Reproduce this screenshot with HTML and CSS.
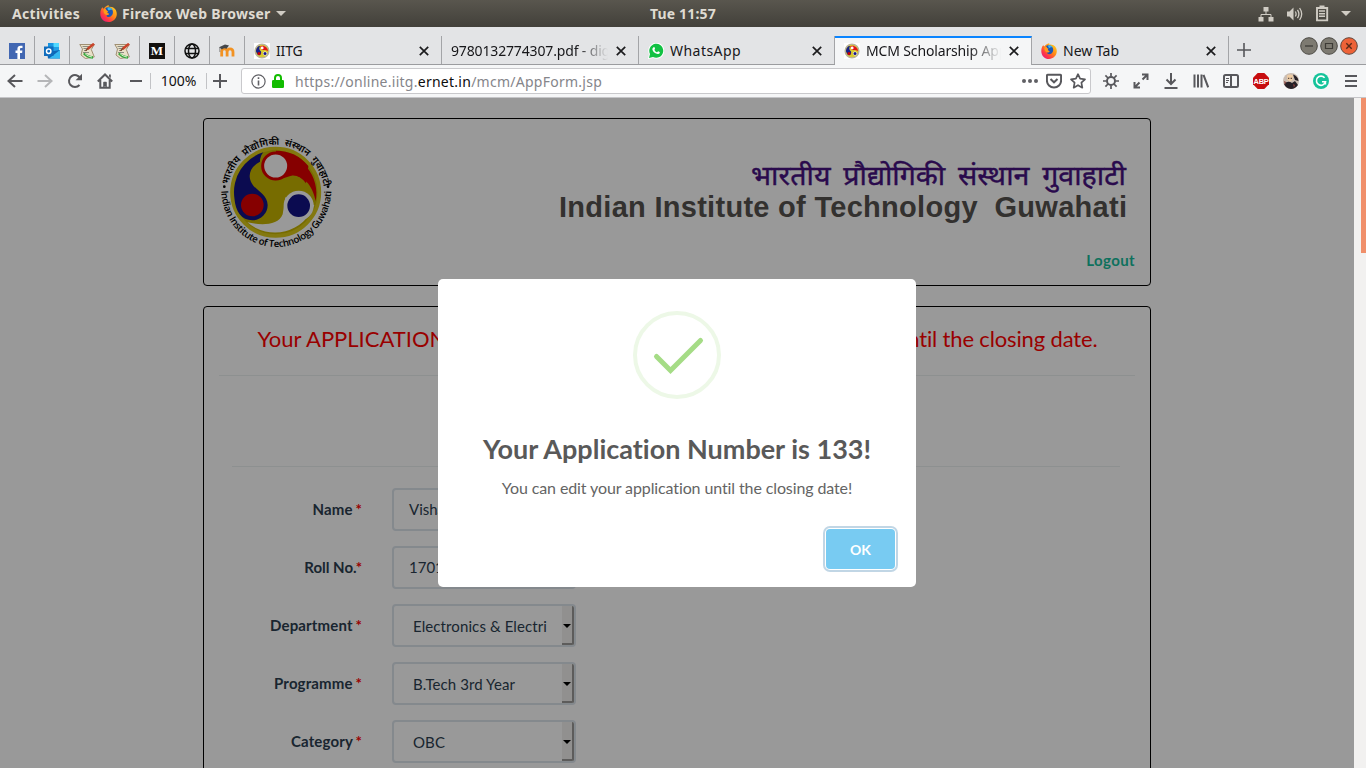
FILE: index.html
```html
<!DOCTYPE html>
<html lang="en">
<head>
<meta charset="utf-8">
<title>MCM Scholarship Application</title>
<link rel="stylesheet" href="styles.css">
</head>
<body>
<svg class="defs" width="0" height="0">
  <defs>
    <linearGradient id="fx" x1="1" y1="0" x2="0.1" y2="1"><stop offset="0" stop-color="#ffe226"/><stop offset=".45" stop-color="#ff8a16"/><stop offset=".75" stop-color="#ff3647"/><stop offset="1" stop-color="#e31587"/></linearGradient>
    <linearGradient id="env" x1="0" y1="0" x2="1" y2="1"><stop offset="0" stop-color="#1490df"/><stop offset="1" stop-color="#28a8ea"/></linearGradient>
    <symbol id="firefox" viewBox="0 0 16 16">
      <path fill="url(#fx)" d="M2.2 2.2 3.4 3.5C5 1.2 6.5.7 8.4.3L8 1.6C13 1 16 4.5 15.8 8.600 15.600 13 12 16 8 16 3.500 16 .3 12.600.3 8.200.3 5.500 1 3.500 2.200 2.200z"/>
      <path fill="#1d57b5" d="M5 3C7 1.500 11 2 12 5.500 12.800 9 10.500 11.500 8 11.200 6 11 5.500 9.500 7 9.300 8.500 9.200 9 8.300 8 7.900 6.500 7.800 6.500 6.500 7.500 5.800 6 5.500 5.500 4 5 3z"/>
      <path fill="#33b7f2" d="M7 2.500c2-.8 4.300.3 4.900 2.200C10.500 4 9 4.500 8.600 5.200 7.500 4.800 7 3.500 7 2.500z"/>
      <path fill="#ff9a1a" d="M3.400 4.500C4.500 3.500 5.500 3.700 6 5c.5.7 1.200.8 1.500.8C6.500 6.500 6.400 7.700 8 7.900c.8.300.2 1.300-1.500 1.400C5 9.500 3 7.500 3.400 4.500z"/>
    </symbol>
    <symbol id="iitg" viewBox="0 0 16 16">
      <rect width="16" height="16" fill="#fff"/>
      <circle cx="8" cy="8" r="6.900" fill="#d9c92e" stroke="#b8b3a0" stroke-width="1.400"/>
      <path fill="#17218c" d="M2 8.500C2 5 4 3 6 3 5 5 5 7 7 8.500 8 12 5 13 3.600 11.500z"/>
      <path fill="#e3131b" d="M6 3.500C9 1.500 14 4 14 8.500 12.500 6.500 10 8 7.500 6.300z"/>
      <circle cx="8.200" cy="4.900" r="1.400" fill="#fff"/><circle cx="5" cy="10.500" r="1.500" fill="#c00"/>
      <circle cx="11" cy="10.500" r="1.900" fill="#fff"/><circle cx="11" cy="10.500" r="1.500" fill="#14148a"/>
    </symbol>
    <symbol id="notes" viewBox="0 0 16 16">
      <path fill="#e9e0c8" stroke="#a08f72" d="M.8 1.500h14.500l-3 5 3 7.500-9 1.500L2 12 3.500 6z"/>
      <path fill="none" stroke="#8b8a80" d="M3.500 3.500h7M4.500 5.500h4M5 7.500h3M4 9.500h6"/>
      <path stroke="#c9442b" stroke-width="2.600" d="M15 .8 8.500 6"/><path stroke="#7d3b1c" stroke-width="1.200" d="M9 5.500 6.500 7.700"/>
      <path fill="none" stroke="#37a63b" stroke-width="2.600" d="M5 10.200c1.500 2 4 3.800 9 4.300"/><path fill="none" stroke="#d8f0d0" d="M6 10.500c2 2 4 3 7 3.500"/>
    </symbol>
    <symbol id="close" viewBox="0 0 10 10"><path stroke="#1c1c1e" stroke-width="1.700" d="M.8.800l8.400 8.400M9.200.8.800 9.200"/></symbol>
  </defs>
</svg>

<div class="screen">
  <header class="panel">
    <span class="activities">Activities</span>
    <svg class="panel-fx" width="17" height="17"><use href="#firefox"/></svg>
    <span class="app-name">Firefox Web Browser</span>
    <svg class="caret" width="10" height="5"><path d="M0 0h10L5 5z" fill="#d0ccc4"/></svg>
    <span class="clock">Tue 11:57</span>
    <div class="tray">
      <svg width="16" height="16" fill="#d0ccc4"><path d="M5.500 1h5v4.500h-5zM.5 11h5v4.500h-5zM10.500 11h5v4.500h-5z"/><path d="M8 5v3.500M3 11V8.500h10V11" fill="none" stroke="#d0ccc4"/></svg>
      <svg width="17" height="16" fill="none" stroke="#d0ccc4" stroke-width="1.300"><path fill="#d0ccc4" stroke="none" d="M1 5.500h2.500L7.500 1.500v13L3.500 10.500H1z"/><path d="M9.300 5.500q1.600 2.500 0 5M11.500 3.800q2.800 4.200 0 8.400M13.600 2q4.200 6 0 12"/></svg>
      <svg width="14" height="17" fill="#d0ccc4"><path fill="none" stroke="#d0ccc4" stroke-width="1.900" d="M2 3h10.200v12.400H2z"/><path d="M4.500.4h5v2.800h-5zM4 5.300h6v1.500H4zM4 7.900h6v1.500H4zM4 10.500h6V12H4z"/></svg>
      <svg width="10" height="5"><path d="M0 0h10L5 5z" fill="#d0ccc4"/></svg>
    </div>
  </header>

  <nav class="tabs">
    <div class="pin"><svg width="16" height="16"><rect width="16" height="16" fill="#4267b2"/><path fill="#fff" d="M8.400 16V10H6.500V7.500h1.900V6c0-2.300 1.300-3.300 3.200-3.300.9 0 1.700.1 1.900.1V5h-1.200c-1 0-1.300.5-1.300 1.200v1.300h2.400L13.100 10H11v6z"/></svg></div>
    <div class="pin"><svg width="16" height="16"><path fill="url(#env)" d="M4 0h11v9H4z"/><path fill="#50d9ff" d="M9.500 0H15v4H9.500z"/><path fill="#0a5aa6" d="M4 5h5v5H4z"/><path fill="#1066b5" d="M3 9l13-2v8.500H4z"/><path fill="#36b8f0" d="M16 7v8.500H5z"/><rect y="3.500" width="9.500" height="9.500" fill="#0f6cbd"/><circle cx="4.700" cy="8.200" r="2.200" fill="none" stroke="#fff" stroke-width="1.500"/></svg></div>
    <div class="pin"><svg width="16" height="16"><use href="#notes"/></svg></div>
    <div class="pin"><svg width="16" height="16"><use href="#notes"/></svg></div>
    <div class="pin"><span class="medium">M</span></div>
    <div class="pin"><svg width="16" height="16" fill="none" stroke="#111" stroke-width="1.500"><circle cx="8" cy="8" r="7"/><ellipse cx="8" cy="8" rx="3.500" ry="7"/><path d="M1.500 5.500h13M1.500 10.500h13"/></svg></div>
    <div class="pin"><svg width="16" height="16"><path fill="none" stroke="#f29222" stroke-width="2.800" d="M2.700 13.500V8.500q0-2.600 2.700-2.600T8.100 8.500v5M8.100 9q0-3.100 2.900-3.100 3 0 3 3.100v4.500"/><path fill="#45474a" d="M0 4.300 6 1.500l4 1-2.500 3.200Q5 4.500 3 6.500z"/><path stroke="#777" stroke-width=".8" d="M.8 4.300V9"/></svg></div>
    <div class="tab"><svg width="16" height="16"><use href="#iitg"/></svg><span class="tab-title">IITG</span><svg class="x" width="10" height="10"><use href="#close"/></svg></div>
    <div class="tab"><span class="tab-title fade pdf">9780132774307.pdf - digital</span><svg class="x" width="10" height="10"><use href="#close"/></svg></div>
    <div class="tab tab-wa"><svg width="16" height="16"><path fill="#fff" d="M0 16 1 11A8 8 0 1 1 5 15z"/><path fill="#12c143" d="M1 15 2 11A7 7 0 1 1 5 14z"/><path fill="#fff" d="M5.600 4.200c.7-.3 1 .2 1.400 1.400.2.500-.6 1-.5 1.300.5 1.100 1.400 1.900 2.500 2.300.4.100.8-1 1.200-.9 1.500.7 1.800.8 1.500 1.600-.5 1.300-2.300 1.400-3.700.7-2-1-3.100-2.400-3.600-3.900-.2-1 .4-2.200 1.200-2.500z"/></svg><span class="tab-title wide">WhatsApp</span><svg class="x" width="10" height="10"><use href="#close"/></svg></div>
    <div class="tab active"><svg width="16" height="16"><use href="#iitg"/></svg><span class="tab-title fade mcm">MCM Scholarship Application</span><svg class="x" width="10" height="10"><use href="#close"/></svg></div>
    <div class="tab"><svg width="16" height="16"><use href="#firefox"/></svg><span class="tab-title newtab">New Tab</span><svg class="x" width="10" height="10"><use href="#close"/></svg></div>
    <svg class="plus" width="14" height="14"><path d="M7 0v14M0 7h14" stroke="#55565a" stroke-width="1.600"/></svg>
    <div class="winbtns">
      <svg width="18" height="18"><circle cx="9" cy="9" r="8.300" fill="#7d7a71" stroke="#4b4943"/><path d="M5 9h8" stroke="#3d3b36" stroke-width="1.300"/></svg>
      <svg width="18" height="18"><circle cx="9" cy="9" r="8.300" fill="#7d7a71" stroke="#4b4943"/><path d="M5.500 6.500h7v5h-7z" fill="none" stroke="#3d3b36" stroke-width="1.200"/></svg>
      <svg width="18" height="18"><circle cx="9" cy="9" r="8.300" fill="#ee6237" stroke="#63463a"/><path d="M6.300 6.300l5.400 5.400M11.700 6.300l-5.400 5.400" stroke="#5b2a17" stroke-width="1.400"/></svg>
    </div>
  </nav>

  <div class="toolbar">
    <div class="cell"><svg width="16" height="16" class="ic"><path d="M8 2 1.500 8 8 14M1.500 8H15.500"/></svg></div>
    <div class="cell"><svg width="16" height="16" class="ic dim"><path d="M8 2 14.500 8 8 14M14.500 8H.5"/></svg></div>
    <div class="cell"><svg width="16" height="16" class="ic"><path d="M12.500 12A6 6 0 1 1 13.300 5.200"/><path d="M15 .8V7.200H8.600z" class="solid"/></svg></div>
    <div class="cell"><svg width="16" height="16" class="ic"><path d="M.8 8.500 8 1.500l7.200 7M3.300 7v7.800h9.400V7"/><path class="solid" d="M6.200 15V9.500q0-.7.700-.7h2.200q.7 0 .7.700V15H8.600v-1.500H7.400V15zM12 1.500h1.800V5L12 3.500z"/></svg></div>
    <div class="cell minus"><svg width="12" height="16" class="ic"><path d="M0 8h12"/></svg></div>
    <div class="zoomval">100%</div>
    <div class="zplus"><svg width="14" height="14" class="ic"><path d="M7 0v14M0 7h14"/></svg></div>
    <div class="urlbar">
      <svg width="15" height="15"><circle cx="7.500" cy="7.500" r="6.600" fill="none" stroke="#606065" stroke-width="1.200"/><path d="M7.500 3.300v1.800M7.500 6.500v5" stroke="#606065" stroke-width="1.600"/></svg>
      <svg class="lock" width="12" height="14"><rect y="6" width="12" height="8" rx="1.200" fill="#12bc00"/><path d="M3 7V4q0-3 3-3t3 3v3" fill="none" stroke="#12bc00" stroke-width="2"/></svg>
      <span class="url">https://online.iitg.<b>ernet.in</b>/mcm/AppForm.jsp</span>
      <div class="urlicons">
        <svg width="16" height="16" fill="#606065"><circle cx="2" cy="8" r="2"/><circle cx="8" cy="8" r="2"/><circle cx="14" cy="8" r="2"/></svg>
        <svg width="16" height="16" class="ic"><path d="M1.900 1.800h12.200q1 0 1 1V7.500a7.100 7 0 0 1-14.200 0V2.800q0-1 1-1zM4.500 6 8 9.300 11.500 6"/></svg>
        <svg width="16" height="16" class="ic"><path stroke-linejoin="round" stroke-width="1.700" d="M8 1.200 10.100 5.700 15 6.300 11.400 9.700 12.300 14.700 8 12.200 3.700 14.700 4.600 9.700 1 6.300 5.900 5.700z"/></svg>
      </div>
    </div>
    <div class="ext">
      <div class="cell"><svg width="16" height="16" class="ic"><circle cx="8" cy="8" r="4"/><path stroke-width="1.700" d="M8 0v3.500M8 12.500V16M0 8h3.500M12.500 8H16M2.400 2.400 5 5M11 11l2.600 2.600M13.600 2.400 11 5M5 11l-2.600 2.600"/></svg></div>
      <div class="cell"><svg width="16" height="16" class="ic"><path d="M9 1.500h5.500V7M14 2 9.500 6.500M7 14.500H1.500V9M2 14l4.500-4.500"/></svg></div>
      <div class="cell"><svg width="16" height="16" class="ic"><path d="M8 0v11M3.500 6.500 8 11l4.500-4.500M1.500 15h13"/></svg></div>
      <div class="cell"><svg width="16" height="16" class="ic"><path d="M1.500 1.500v13M5 1.500v13M8.500 1.500v13M10.500 1.800l4.700 12.500"/></svg></div>
      <div class="cell"><svg width="16" height="16" class="ic"><rect x="1" y="2" width="14" height="12" rx="1.500"/><path d="M8 2v12"/><path stroke-width="1" d="M3 5.500h3M3 7.500h3M3 9.500h2"/></svg></div>
      <div class="cell"><svg width="16" height="16"><path fill="#c70d0f" d="M4.700 0h6.600L16 4.700v6.600L11.300 16H4.700L0 11.300V4.700z"/><text x="8" y="10.800" text-anchor="middle" class="abp">ABP</text></svg></div>
      <div class="cell"><svg width="16" height="16"><circle cx="8" cy="8" r="8" fill="#cbbdb2"/><path fill="#262027" d="M10 1.500Q15 3 15.500 8L12 7zM1 11Q5 7 9 10l3-2 3 4Q12 16 8 16 3 15.500 1 11z"/><path fill="#efcda4" d="M4 2.500q3-2 6 0l-.5 4.500L7 8.500 4.500 7z"/><path fill="#8a413d" d="M1 8l2 1-1 3zM10 11l2 1-1 3z"/><path stroke="#3a2b2c" d="M5 5.300h1.300M7.600 5.300H9"/></svg></div>
      <div class="cell"><svg width="16" height="16"><circle cx="8" cy="8" r="8" fill="#15c39a"/><path fill="none" stroke="#fff" stroke-width="1.600" d="M11.600 4.800A4.600 4.600 0 1 0 12.500 8.800H9M12.400 8.500v3"/></svg></div>
      <div class="cell"><svg width="12" height="16" class="ic"><path d="M0 3h12M0 8h12M0 13h12"/></svg></div>
    </div>
  </div>

  <div class="viewport">
    <main class="page">
      <section class="card banner">
        <svg class="logo" width="115" height="115" viewBox="60 75 345 345">
          <defs>
            <path id="arcTop" d="M84 229A145 145 0 0 1 371 229"/>
            <path id="arcBottom" d="M64 239A165 172 0 1 0 394 239"/>
          </defs>
          <circle cx="227" cy="247" r="131" fill="#c6b400" stroke="#dac91a" stroke-width="11"/>
          <path fill="#131386" d="M190 127A125 125 0 0 0 103 262Q108 330 157 331A46 46 0 0 0 203 285C202 245 150 240 149 198Q150 170 180 155 180 138 190 127z"/>
          <circle cx="157" cy="285" r="34" fill="#e00000"/>
          <path fill="#e00000" d="M227 126A125 125 0 0 1 347 274C340 235 318 200 280 196 255 194 240 212 225 211A43 43 0 0 1 227 126z"/>
          <circle cx="227" cy="168" r="46" fill="none" stroke="#c6b400" stroke-width="5"/>
          <path fill="#e00000" d="M228 122Q288 122 325 168L318 220Q300 196 278 196L243 207 228 203Z"/>
          <circle cx="227" cy="168" r="39" fill="#fff" stroke="#e00000" stroke-width="9"/>
          <path fill="#fff" d="M343 285A126 126 0 0 1 142 337C175 345 235 350 248 313L256 262z"/>
          <circle cx="296" cy="287" r="45" fill="#fff"/>
          <circle cx="296" cy="287" r="34" fill="#131386"/>
          <text class="ring-hi"><textPath href="#arcTop" startOffset="5" textLength="410" lengthAdjust="spacingAndGlyphs">भारतीय प्रौद्योगिकी संस्थान गुवाहाटी</textPath></text>
          <text class="ring-en"><textPath href="#arcBottom" startOffset="3" textLength="522">Indian Institute of Technology Guwahati</textPath></text>
          <circle cx="73" cy="230" r="4"/><circle cx="384" cy="230" r="4"/>
        </svg>
        <div class="banner-right">
          <svg class="wordmark" width="570" height="70">
            <text class="wm-hi" x="192" y="30" textLength="375" lengthAdjust="spacingAndGlyphs">भारतीय प्रौद्योगिकी संस्थान गुवाहाटी</text>
            <text class="wm-en" x="0" y="62" textLength="568" xml:space="preserve">Indian Institute of Technology  Guwahati</text>
          </svg>
          <a class="logout">Logout</a>
        </div>
      </section>

      <section class="card form-card">
        <h3 class="notice"><span>Your APPLICATION NUMBER is 133.</span><span class="notice-end">You can edit it until the closing date.</span></h3>
        <div class="rule"></div>
        <div class="form">
          <div class="row"><label>Name <i>*</i></label><div class="field">Vishal</div></div>
          <div class="row"><label class="tight">Roll No.<i>*</i></label><div class="field">170102</div></div>
          <div class="row"><label>Department <i>*</i></label><div class="field select"><span>Electronics &amp; Electri</span><div class="arrow"></div></div></div>
          <div class="row"><label>Programme <i>*</i></label><div class="field select"><span>B.Tech 3rd Year</span><div class="arrow"></div></div></div>
          <div class="row"><label>Category <i>*</i></label><div class="field select"><span>OBC</span><div class="arrow"></div></div></div>
        </div>
      </section>
    </main>
    <div class="scrollbar"><div class="thumb"></div></div>

    <div class="overlay">
      <div class="modal">
        <svg class="success" width="88" height="88" fill="none"><circle cx="44" cy="44" r="42" stroke="#edf8e7" stroke-width="4"/><path stroke="#a5dc86" stroke-width="5" stroke-linecap="round" d="M23.500 45.500 37.500 59.500 67.500 29.500"/></svg>
        <h2 class="modal-title">Your Application Number is 133!</h2>
        <p class="modal-text">You can edit your application until the closing date!</p>
        <div class="modal-footer"><button class="ok">OK</button></div>
      </div>
    </div>
  </div>
</div>
</body>
</html>
```
FILE: styles.css
```css
* { box-sizing: border-box; }
body { margin: 0; font-family: Lato, sans-serif; font-variant-ligatures: none; }
svg { display: block; flex: none; }
.defs { position: absolute; }
.screen { width: 1366px; height: 768px; overflow: hidden; display: flex; flex-direction: column; }

/* desktop panel */
.panel { height: 27px; flex: none; display: flex; align-items: center; background: linear-gradient(#59564e, #42403a); color: #dfdbd2; font: bold 14px "Noto Sans", sans-serif; white-space: nowrap; padding-left: 12px; }
.activities { width: 88px; letter-spacing: .3px; }
.panel-fx { margin-right: 5px; }
.app-name { width: 150px; letter-spacing: .28px; }
.caret { margin-left: 4px; }
.clock { margin-left: 364px; letter-spacing: .15px; }
.tray { margin-left: auto; display: flex; align-items: center; gap: 12px; padding-right: 15px; }

/* tab strip */
.tabs { height: 38px; flex: none; display: flex; align-items: stretch; background: #e3e4e6; padding-top: 9px; box-shadow: inset 0 -1px #9b9c9f; color: #17171a; font: 14px "Noto Sans", sans-serif; }
.pin { width: 35px; padding: 7px 9px 0; border-right: 1px solid #a3a4a7; height: 28px; }
.medium { display: block; width: 16px; height: 16px; background: #12100e; color: #fff; font: bold 13px/16px "Liberation Serif", serif; text-align: center; }
.tab { width: 197px; height: 28px; display: flex; align-items: center; padding: 2px 12px 0 9px; border-right: 1px solid #a3a4a7; white-space: nowrap; }
.tab-wa { width: 196px; }
.tab-title { margin-left: 6px; flex: 1; min-width: 0; overflow: hidden; letter-spacing: -.15px; padding-bottom: 2px; }
.wide { letter-spacing: .45px; }
.pdf { margin-left: 0; }
.newtab { letter-spacing: 0; }
.fade { margin-right: 8px; -webkit-mask-image: linear-gradient(90deg, #000 calc(100% - 32px), transparent); mask-image: linear-gradient(90deg, #000 calc(100% - 32px), transparent); }
.active { height: 29px; background: #f5f6f7; padding-top: 0; padding-bottom: 1px; border-top: 2px solid #0a84ff; }
.plus { margin: 7px 0 0 8px; }
.winbtns { display: flex; gap: 2px; margin: 1px 8px 0 auto; }

/* navigation toolbar */
.toolbar { height: 33px; flex: none; display: flex; align-items: center; background: #f5f6f7; border-bottom: 1px solid #c5c5c8; }
.cell { width: 30px; height: 32px; display: flex; align-items: center; justify-content: center; }
.ic { fill: none; stroke: #58585c; stroke-width: 2; }
.dim { stroke: #b5b6b8; }
.solid { fill: #58585c; stroke: none; }
.minus { padding-left: 2px; }
.zoomval { width: 57px; height: 16px; border: solid #c2c3c6; border-width: 0 1px; text-align: center; font: 14px/16px "Noto Sans", sans-serif; letter-spacing: -.05px; color: #111; }
.zplus { width: 34px; padding-left: 6px; }
.urlbar { width: 850px; height: 26px; background: #fff; border: 1px solid #c9c9cc; border-radius: 3px; display: flex; align-items: center; padding: 0 4px 0 9px; }
.lock { margin: 0 11px 0 6px; }
.url { font: 14px "Noto Sans", sans-serif; letter-spacing: .26px; color: #85858a; }
.url b { font-weight: 400; color: #0c0c0d; }
.urlicons { display: flex; gap: 8px; margin-left: auto; }
.ext { display: flex; margin-left: auto; }
.abp { font: bold 7.5px "Liberation Sans", sans-serif; letter-spacing: -.3px; fill: #fff; }

/* page */
.viewport { position: relative; flex: 1; min-height: 0; display: flex; background: #fff; overflow: hidden; }
.page { width: 1354px; padding: 20px 203px; height: 670px; display: flex; flex-direction: column; gap: 20px; }
.card { border: 1px solid #000; border-radius: 4px; width: 948px; flex: none; }
.banner { height: 168px; display: flex; justify-content: space-between; padding: 16px 15px 0 16px; }
.logo { overflow: visible; }
.banner-right { display: flex; flex-direction: column; align-items: flex-end; padding-top: 20px; }
.wordmark { margin-right: 6px; }
.wm-hi { font: 27px "Noto Sans Devanagari", "Noto Sans", sans-serif; word-spacing: 5px; fill: #461180; stroke: #461180; stroke-width: .4px; }
.wm-en { font: bold 29px "Liberation Sans", sans-serif; fill: #55534f; white-space: pre; }
.ring-hi { font: 600 29px "Noto Sans Devanagari", "Noto Sans", sans-serif; word-spacing: 8px; }
.ring-en { font: 600 29px "Open Sans", sans-serif; }
.logout { margin-top: 25px; font-weight: 700; font-size: 15px; letter-spacing: .4px; line-height: 20px; color: #18bc9c; }
.form-card { height: 500px; padding: 0 15px; }
.notice { display: flex; justify-content: space-between; width: 841px; margin: 0 auto; padding-top: 17px; font-weight: 400; font-size: 22px; line-height: 30px; height: 68px; color: #f00; white-space: nowrap; padding-left: 1px; }
.notice-end { letter-spacing: -.15px; }
.rule { border-top: 1px solid #ecf0f1; }
.form { margin: 90px 15px 0 13px; border-top: 1px solid #ecf0f1; padding-top: 21px; display: flex; flex-direction: column; gap: 15px; color: #2c3e50; font-size: 15px; }
.row { display: flex; height: 43px; align-items: center; }
.row label { width: 130px; text-align: right; font-weight: 700; margin-right: 30px; padding-bottom: 2px; letter-spacing: .15px; white-space: nowrap; }
.row .tight { letter-spacing: 0; }
.row i { font-style: normal; color: #f00; margin-left: -1px; }
.field { width: 184px; height: 43px; border: 2px solid #dce4ec; border-radius: 4px; padding: 0 15px; line-height: 39px; }
.select { display: flex; justify-content: space-between; padding: 0 0 0 19px; line-height: 41px; white-space: nowrap; letter-spacing: .1px; }
.arrow { width: 12px; background: #f2f0ee; border: solid #9b9a98; border-width: 0 2px 2px 0; border-radius: 0 2px 2px 0; display: flex; align-items: center; justify-content: center; padding: 2px 0 0 0; }
.arrow::after { content: ""; border: solid transparent; border-width: 4px 4px 0; border-top-color: #000; }
.scrollbar { width: 12px; background: #f2f1f0; padding-left: 7px; position: relative; z-index: 2; }
.thumb { height: 155px; background: #f08f6a; }

/* dialog */
.overlay { position: absolute; inset: 0 12px 0 0; background: rgba(0,0,0,.4); }
.modal { position: absolute; left: 438px; top: 181px; width: 478px; height: 308px; background: #fff; border-radius: 5px; display: flex; flex-direction: column; align-items: center; padding-top: 32px; }
.modal-title { margin: 31px 0 0; font-size: 27px; line-height: 38px; font-weight: 700; color: #595959; white-space: nowrap; }
.modal-text { margin: 10px 0 0; font-size: 16px; line-height: 20px; letter-spacing: -.11px; color: #646464; white-space: nowrap; }
.modal-footer { align-self: stretch; display: flex; justify-content: flex-end; margin-top: 31px; padding-right: 21px; }
.ok { width: 69px; height: 40px; border: 0; border-radius: 4px; background: #78cbf2; color: #fff; font: bold 14px Lato, sans-serif; box-shadow: 0 0 0 1px #fff, 0 0 0 3px rgba(43,114,165,.29); }
```
